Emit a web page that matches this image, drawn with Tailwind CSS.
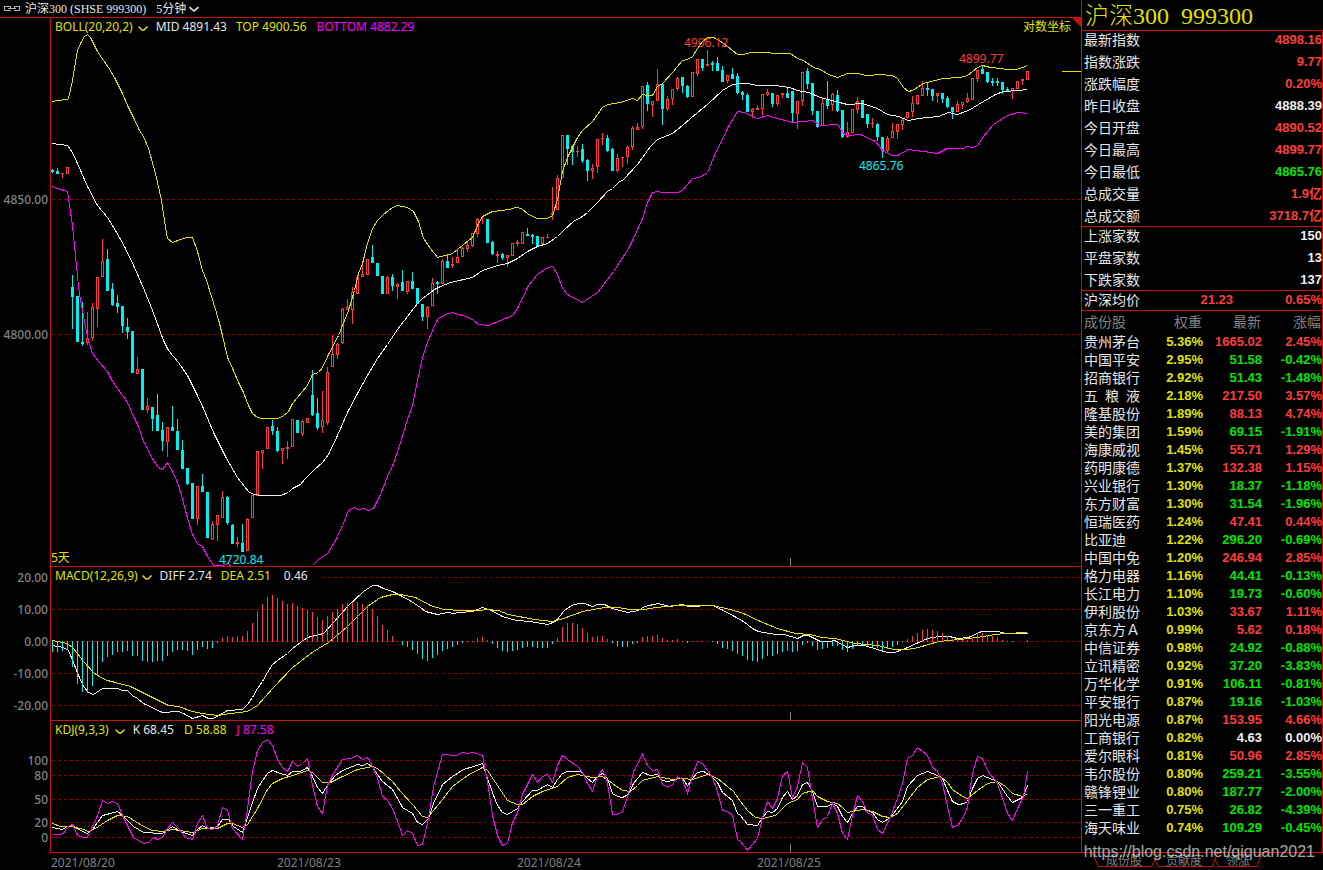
<!DOCTYPE html>
<html lang="zh-CN">
<head>
<meta charset="utf-8">
<title>沪深300 (SHSE 999300)</title>
<script src="https://cdn.jsdelivr.net/npm/@tailwindcss/browser@4"></script>
</head>
<body class="bg-black text-[#e6e6e6]">
<div class="relative flex min-h-screen w-full overflow-hidden bg-black font-['Noto_Sans','Noto_Sans_CJK_SC',sans-serif] text-xs">

  <main class="flex min-w-0 flex-1 flex-col">
    <header class="flex h-[17px] items-center pl-1 font-['Liberation_Serif','Noto_Sans_CJK_SC',serif] text-xs leading-4">
      <svg class="mr-1 h-[6px] w-[17px]" viewBox="0 0 17 6" fill="none" stroke="#b4b4b4" shape-rendering="crispEdges" aria-hidden="true"><path d="M6 1.500V.5H.5V4.500H6V3.500M10 1.500V.5H15.500V4.500H10V3.500M4 2.500H12"/></svg>
      <h1 class="whitespace-pre">沪深300 (SHSE 999300)</h1>
      <button type="button" class="ml-[10px] flex items-center gap-[3px]">5分钟
        <svg class="h-[6px] w-[10px]" viewBox="0 0 10 6" fill="none" stroke="#e6e6e6" stroke-width="1.6" aria-hidden="true"><path d="M.5 1 5 5 9.500 1"/></svg>
      </button>
    </header>

    <section class="flex min-h-[549px] flex-1" aria-label="BOLL">
      <div class="flex w-[50px] flex-col gap-[119px] border-t border-[#c81408] pt-[174px] pr-[2px] text-right leading-4 font-medium text-[#828282]">
        <span>4850.00</span><span>4800.00</span>
      </div>
      <div class="relative min-w-0 flex-1 overflow-hidden border-t border-l border-[#c81408]">
        <svg class="absolute inset-0 h-full w-full" aria-hidden="true">
          <g transform="translate(-50.5 -17.5)" fill="none" shape-rendering="crispEdges">
            <path stroke="#8c0000" stroke-dasharray="3 3" d="M51 199H3000M51 334H3000"/>
            <path stroke="#828282" d="M790 557V567"/>
            <path id="upWick" stroke="#ff3c3c"/>
            <path id="upBody" stroke="#ff3c3c" fill="#000"/>
            <path id="downWick" stroke="#00f0f0"/>
            <path id="downBody" fill="#00f0f0"/>
            <polyline stroke="#e1e100" points="52,101 57,100 67,99 68,98 72,80 77,50 80,43 84,36 87,34 90,37 97,51 103,60 108,67 114,77 122,93 127,105 134,119 139,130 143,136 148,148 155,173 161,200 164,220 167,238 172,242 180,239 186,237 192,237 197,251 202,270 206,280 212,299 218,319 222,335 227,357 233,370 238,382 243,392 248,405 252,413 257,417 262,418 277,418 282,416 288,411 292,403 302,391 307,385 312,374 318,372 322,367 328,354 338,335 348,310 354,290 358,273 362,263 367,243 372,228 377,220 383,214 392,207 397,205 407,207 413,211 418,221 423,238 430,248 437,257 452,253 468,240 472,237 477,225 482,216 492,211 509,209 515,207 521,208 528,214 537,218 547,218 552,215 557,199 562,171 567,157 572,147 577,137 582,130 592,121 602,107 607,104 620,102 632,98 637,100 642,94 647,95 652,95 657,86 662,83 672,72 682,60 687,59 692,56 697,48 702,41 707,37 713,37 722,42 737,54 743,54 750,52 790,53 797,58 803,60 813,67 820,69 828,74 837,77 847,73 858,73 865,75 883,74 888,75 892,75 897,78 903,87 908,91 912,90 923,83 942,78 960,77 967,75 977,67 982,65 990,67 1000,68 1007,69 1016,69 1022,67 1027,65"/>
            <polyline stroke="#f0f0f0" points="52,143 67,145 72,152 77,163 87,186 97,205 107,217 115,230 124,246 134,267 144,290 152,310 163,340 168,350 178,362 187,375 197,395 203,408 213,432 225,456 237,477 248,491 253,494 262,495 280,495 288,492 292,488 300,484 305,478 313,470 322,462 328,454 337,435 347,412 357,393 367,375 377,358 387,344 397,329 407,316 417,303 422,298 434,289 440,286 450,282 472,277 482,270 497,265 507,263 517,258 527,251 537,246 547,243 557,236 563,230 573,221 582,216 587,212 597,202 607,191 612,188 618,182 623,179 637,164 650,146 657,139 672,133 682,125 697,112 707,104 722,90 732,84 739,83 747,83 757,85 775,85 789,87 797,90 808,92 820,97 835,101 847,104 862,103 877,108 887,114 898,116 908,120 918,118 938,116 948,112 957,114 968,110 973,107 983,101 995,94 1003,91 1018,90 1027,89"/>
            <polyline stroke="#f0f" points="52,186 57,188 67,191 68,198 72,225 78,286 80,300 87,336 92,353 98,361 107,371 112,381 127,402 133,416 138,426 143,441 153,460 158,467 162,469 167,462 172,471 177,482 182,498 187,518 192,534 197,543 202,546 207,556 213,565 222,565 228,563 232,568 300,575 312,565 318,559 327,553 335,540 342,525 348,510 353,507 358,509 363,508 368,510 373,508 380,494 387,476 393,463 400,442 407,419 412,405 417,380 422,357 427,342 432,330 437,319 445,314 452,312 468,317 473,320 478,324 488,325 500,320 512,315 517,308 528,285 537,274 547,267 552,266 557,274 562,288 567,294 582,302 597,292 613,271 628,248 633,238 642,218 647,202 652,192 657,191 662,192 677,192 682,190 692,178 699,177 707,172 713,157 728,126 737,111 743,112 757,118 767,115 780,119 793,122 812,120 820,125 837,124 843,133 847,135 860,134 875,141 883,151 892,155 897,155 908,149 937,153 947,148 962,148 967,146 972,147 977,145 983,136 993,124 1007,115 1017,112 1027,113"/>
          </g>
        </svg>
        <div class="relative flex items-start pt-px pl-1 leading-4">
          <button type="button" class="mr-2 flex items-center gap-[5px] text-[#e1e100]">BOLL(20,20,2)
            <svg class="mt-[2px] h-[5px] w-[10px]" viewBox="0 0 10 5" fill="none" stroke="#e1e100" stroke-width="1.5" aria-hidden="true"><path d="M.5.5 4 4H6L9.500.5"/></svg>
          </button>
          <span class="mr-[9px]">MID 4891.43</span><span class="mr-[10px] text-[#e1e100]">TOP 4900.56</span><span class="text-[#f0f]">BOTTOM 4882.29</span>
        </div>
        <button type="button" class="absolute top-px right-[10px] leading-4 text-[#e1e100]">对数坐标</button>
        <svg class="absolute top-0 right-0 h-[9px] w-[9px]" viewBox="0 0 9 9" fill="#c81408" aria-hidden="true"><path d="M0 0H9V9Z"/></svg>
        <div class="absolute top-[53px] right-0 h-px w-[19px] bg-[#e1e100]"></div>
        <span class="absolute bottom-0 left-0 leading-4 text-[#e1e100]">5天</span>
        <span class="absolute top-[17px] left-[633px] leading-4 text-[#ff3c3c]">4906.12</span>
        <span class="absolute top-[33px] left-[908px] leading-4 text-[#ff3c3c]">4899.77</span>
        <span class="absolute top-[140px] left-[808px] leading-4 text-[#00f0f0]">4865.76</span>
        <span class="absolute top-[536px] left-[168px] leading-3 text-[#00f0f0]">4720.84</span>
      </div>
    </section>

    <section class="flex h-[154px]" aria-label="MACD">
      <div class="flex w-[50px] flex-col gap-4 pt-1 pr-[2px] text-right leading-4 font-medium text-[#828282]">
        <span>20.00</span><span>10.00</span><span>0.00</span><span>-10.00</span><span>-20.00</span>
      </div>
      <div class="relative min-w-0 flex-1 overflow-hidden border-t border-l border-[#c81408]">
        <svg class="absolute inset-0 h-full w-full" aria-hidden="true">
          <g transform="translate(-50.5 -566.5)" fill="none" shape-rendering="crispEdges">
            <path stroke="#8c0000" stroke-dasharray="3 3" d="M51 577H3000M51 609H3000M51 641H3000M51 673H3000M51 705H3000"/>
            <path stroke="#828282" d="M790 711V720"/>
            <polyline stroke="#f0f0f0" points="52,645 63,647 68,650 73,662 78,675 83,686 88,692 93,694 102,688 117,688 122,690 127,690 132,695 137,698 143,703 162,712 178,711 183,713 192,718 202,715 208,718 213,718 220,714 227,710 242,709 247,704 252,697 257,688 262,681 267,672 272,664 277,660 287,653 292,648 307,637 323,633 333,622 347,606 363,591 372,585 377,585 383,588 392,591 400,595 411,601 420,607 425,611 437,614 447,612 453,613 459,612 472,611 482,607 491,610 502,616 516,620 530,621 547,624 555,621 564,610 571,605 578,603 584,603 592,606 597,604 604,604 612,608 627,612 638,610 644,606 658,603 669,606 682,604 688,606 712,605 721,609 734,616 743,621 752,628 758,631 775,634 784,634 797,638 803,635 808,635 820,641 829,641 834,640 847,647 855,645 864,645 877,649 887,652 894,652 905,648 916,643 927,638 938,636 949,636 957,638 968,637 981,631 998,631 1005,633 1027,633"/>
            <polyline stroke="#e1e100" points="52,640 67,643 73,648 83,661 93,672 100,677 107,680 115,682 130,686 162,702 168,705 178,706 192,711 202,713 217,715 230,713 247,711 257,705 272,688 292,667 313,651 328,642 347,626 367,606 380,597 392,594 400,594 415,597 430,605 443,609 461,610 478,610 487,609 498,610 508,614 534,619 552,621 563,618 582,611 604,607 617,607 630,609 643,609 656,607 675,605 712,605 730,609 743,613 760,621 777,628 795,633 810,634 821,637 834,638 855,643 877,645 894,649 907,649 918,647 938,641 959,639 977,637 994,634 1005,633 1027,632"/>
            <path id="macdUp" stroke="#ff3c3c"/>
            <path id="macdDown" stroke="#00f0f0"/>
          </g>
        </svg>
        <div class="relative flex w-[269px] items-start bg-black pt-px pl-1 leading-4">
          <button type="button" class="mr-2 flex items-center gap-1 text-[#e1e100]">MACD(12,26,9)
            <svg class="mt-[2px] h-[5px] w-[10px]" viewBox="0 0 10 5" fill="none" stroke="#e1e100" stroke-width="1.5" aria-hidden="true"><path d="M.5.5 4 4H6L9.500.5"/></svg>
          </button>
          <span class="mr-[9px]">DIFF 2.74</span><span class="mr-[13px] text-[#e1e100]">DEA 2.51</span><span>0.46</span>
        </div>
      </div>
    </section>

    <section class="flex h-[132px]" aria-label="KDJ">
      <div class="flex w-[50px] flex-col pt-[34px] pr-[2px] text-right leading-[14px] font-medium text-[#828282]">
        <span>100</span><span class="mt-px">80</span><span class="mt-[10px]">50</span><span class="mt-[9px]">20</span><span class="mt-px">0</span>
      </div>
      <div class="relative min-w-0 flex-1 overflow-hidden border-t border-l border-[#c81408]">
        <svg class="absolute inset-0 h-full w-full" aria-hidden="true">
          <g transform="translate(-50.5 -720.5)" fill="none" shape-rendering="crispEdges">
            <path stroke="#8c0000" stroke-dasharray="3 3" d="M51 760H3000M51 775H3000M51 799H3000M51 822H3000M51 837H3000"/>
            <path stroke="#828282" d="M790 843V852"/>
            <polyline stroke="#f0f0f0" points="52,827 57,828 62,829 67,826 72,825 80,830 87,833 92,829 102,815 110,813 117,811 122,815 133,826 143,832 162,833 172,826 180,831 192,835 197,829 202,825 207,828 217,826 222,819 228,819 233,826 242,832 247,817 252,802 257,788 262,780 267,773 272,770 280,773 287,775 292,771 300,771 307,767 312,776 317,787 322,793 328,783 335,775 342,770 357,764 362,765 367,763 372,767 377,774 382,781 392,789 400,803 402,807 412,813 417,822 422,824 428,818 433,803 442,784 452,776 463,769 473,766 482,763 487,778 492,792 497,805 502,812 507,814 517,808 522,801 532,790 537,790 547,784 552,787 557,779 562,773 567,771 580,771 587,778 592,782 597,776 602,773 607,778 612,793 617,796 622,797 628,794 633,783 642,772 650,775 657,774 662,780 667,781 672,780 677,778 682,778 687,785 692,778 697,772 703,771 710,775 717,782 722,792 732,800 737,813 740,815 747,824 757,825 762,817 767,811 772,812 777,808 782,797 787,791 792,799 797,795 802,784 807,782 812,791 817,806 827,806 832,803 837,806 842,816 847,822 852,813 857,806 862,806 867,810 872,812 877,819 882,822 890,817 902,801 907,786 917,775 927,771 937,775 942,778 947,790 952,801 958,804 964,803 967,801 972,788 977,778 982,775 997,781 1007,796 1012,802 1022,797 1027,785"/>
            <polyline stroke="#e1e100" points="52,823 60,826 72,826 83,829 88,831 95,828 107,820 117,815 127,816 143,826 152,830 162,831 172,829 192,832 202,828 217,828 227,823 232,823 242,827 247,824 257,808 267,789 272,783 282,778 292,775 307,770 312,772 322,782 330,782 340,777 357,769 372,766 377,768 392,781 400,791 412,804 422,816 427,817 433,810 442,799 452,786 467,775 482,767 487,770 497,785 507,800 517,804 522,804 532,796 542,791 557,786 567,777 577,774 592,777 602,776 612,783 622,790 630,791 637,785 642,780 657,776 672,779 682,778 692,779 707,774 717,778 727,786 733,791 740,801 747,810 755,817 762,818 775,815 787,803 797,799 802,793 812,790 817,796 827,801 837,803 842,807 847,812 862,809 872,811 882,816 890,817 897,813 907,800 917,787 927,779 940,776 947,782 952,789 962,796 967,798 977,790 987,783 997,781 1005,786 1012,793 1022,796 1027,793"/>
            <polyline stroke="#f0f" points="52,834 59,834 63,833 67,826 72,824 77,835 83,837 87,837 92,826 97,815 102,800 107,803 112,801 117,803 122,815 127,825 133,837 143,843 148,842 153,837 157,839 162,837 167,828 172,822 179,829 185,837 192,839 197,823 202,815 207,828 212,829 217,825 222,807 227,810 232,828 242,839 247,808 252,771 257,750 262,742 267,739 272,745 277,759 282,767 287,771 292,761 297,766 302,763 307,758 312,785 317,806 322,813 327,785 333,773 342,759 350,758 357,755 362,759 367,757 372,766 377,778 382,796 387,800 392,808 400,829 402,835 407,830 412,833 417,845 422,844 428,818 433,786 442,754 455,755 462,752 467,753 473,752 482,755 487,781 492,815 497,835 502,845 507,843 512,822 517,812 522,794 532,774 537,782 542,776 547,774 552,782 557,765 562,755 567,759 577,766 582,772 587,783 592,791 597,776 602,769 607,783 612,814 617,814 622,811 628,793 633,771 642,754 647,765 652,770 657,769 662,784 667,787 672,784 677,776 682,779 687,793 692,775 697,761 702,763 707,770 712,777 717,791 722,810 727,811 732,815 737,839 740,841 747,850 757,838 762,817 767,801 772,808 777,798 782,775 787,771 792,797 797,786 802,762 807,767 812,798 817,827 822,819 827,816 832,803 837,813 842,833 847,839 852,815 857,795 862,801 867,812 872,815 877,829 882,833 890,816 897,798 902,783 907,758 912,755 917,747 922,751 927,755 932,767 937,771 942,783 947,806 952,827 957,825 962,818 967,807 972,773 977,756 982,758 987,770 997,783 1007,813 1012,820 1017,808 1023,796 1027,771"/>
          </g>
        </svg>
        <div class="relative flex items-start pt-px pl-1 leading-4">
          <button type="button" class="mr-2 flex items-center gap-[6px] text-[#e1e100]">KDJ(9,3,3)
            <svg class="mt-[2px] h-[5px] w-[10px]" viewBox="0 0 10 5" fill="none" stroke="#e1e100" stroke-width="1.5" aria-hidden="true"><path d="M.5.5 4 4H6L9.500.5"/></svg>
          </button>
          <span class="mr-[10px]">K 68.45</span><span class="mr-[10px] text-[#e1e100]">D 58.88</span><span class="text-[#f0f]">J 87.58</span>
        </div>
      </div>
    </section>

    <footer class="flex h-[18px] pl-[50px] leading-[19px] text-[#828282]">
      <div class="flex min-w-0 flex-1 border-t border-[#c81408] pl-px">
        <span class="w-[226px]">2021/08/20</span><span class="w-[240px]">2021/08/23</span><span class="w-[240px]">2021/08/24</span><span>2021/08/25</span>
      </div>
    </footer>
  </main>

  <aside class="flex w-[242px] shrink-0 flex-col text-sm leading-[14px]">
    <div class="flex flex-1 flex-col border-l border-[#c81408]">
      <h2 class="flex h-[30px] items-center gap-3 pt-px pl-[3px] font-['Liberation_Serif','Noto_Sans_CJK_SC',serif] text-2xl leading-6 font-light text-[#e1e100]"><span>沪深300</span><span>999300</span></h2>
      <div class="flex flex-1 flex-col border-t border-r border-[#c81408] font-['Liberation_Sans','Noto_Sans_CJK_SC',sans-serif]">
        <dl id="quote" class="flex flex-col gap-2 pt-[2px] pb-[3px]"></dl>
        <dl id="breadth" class="flex flex-col gap-2 border-t border-[#c81408] pt-[2px] pb-[3px]"></dl>
        <dl class="flex border-t border-[#c81408] pt-[2px] pb-[3px]">
          <dt class="w-[62px] pl-[2px]">沪深均价</dt>
          <dd class="w-[89px] text-right text-[13px] font-bold text-[#ff3c3c]">21.23</dd>
          <dd class="flex-1 text-right text-[13px] font-bold text-[#ff3c3c]">0.65%</dd>
        </dl>
        <table class="w-full table-fixed border-t border-[#c81408]">
          <colgroup><col class="w-[62px]"><col class="w-[59px]"><col class="w-[59px]"><col></colgroup>
          <thead>
            <tr class="h-[22px] text-[#828282]">
              <th scope="col" class="pl-[2px] text-left font-normal">成份股</th><th scope="col" class="pr-px text-right font-normal">权重</th><th scope="col" class="pr-px text-right font-normal">最新</th><th scope="col" class="pr-px text-right font-normal">涨幅</th>
            </tr>
          </thead>
          <tbody id="stocks"></tbody>
        </table>
      </div>
    </div>
    <nav class="relative h-[18px] font-['Noto_Sans_CJK_SC',sans-serif] text-xs text-[#828282]" aria-label="板块">
      <svg class="absolute inset-0 h-full w-full" fill="none" stroke="#c81408" aria-hidden="true"><path d="M0 .5H242M11 .5 17.500 14.500H70.500L77 .5M73 7 77 14.500H131L137 .5M133.500 7 137.500 14.500H176L181 .5"/></svg>
      <div class="relative flex gap-6 pl-[25px] leading-4">
        <button type="button">成份股</button><button type="button">贡献度</button><button type="button">领涨</button>
      </div>
    </nav>
  </aside>

  <div class="pointer-events-none absolute right-2 bottom-2 font-['Liberation_Sans',sans-serif] text-base leading-5 text-white/65">https://blog.csdn.net/qiquan2021</div>
</div>

<script>
// Candles, one every five pixels: direction, high, body top, body bottom, low
const candles = `c 169 170 172 173|c 168 171 174 174|r 173 173 174 178|r 167 167 174 174|c 275 287 297 329|c 296 296 342 342|c 302 342 344 346|r 312 338 343 345|r 303 307 338 341|r 277 277 309 327
r 239 261 277 277|c 249 259 291 291|c 283 289 305 306|c 295 303 307 313|c 306 306 326 333|c 318 327 332 339|c 331 331 373 373|r 357 369 374 374|c 369 369 410 410|r 398 406 410 413
c 407 407 419 431|c 394 415 431 431|c 422 430 441 451|r 427 427 442 457|c 406 427 431 431|c 419 431 450 450|c 440 450 469 469|c 468 468 484 485|c 483 483 519 519|r 486 486 519 525
c 474 486 492 492|c 492 492 538 538|r 521 524 539 540|r 515 515 525 541|r 491 497 518 518|c 496 497 523 525|c 524 525 544 544|r 537 542 544 547|c 524 543 552 552|r 518 519 551 551
r 495 495 518 518|r 451 451 496 496|r 450 450 453 469|r 427 427 449 449|c 420 426 431 435|c 427 431 451 452|r 448 448 451 464|r 441 447 449 459|r 419 419 447 447|c 420 420 433 433
r 420 421 434 436|r 418 418 423 423|c 370 395 415 416|c 398 413 428 430|r 391 420 427 433|r 367 372 423 425|r 335 354 367 367|r 343 344 355 359|r 308 309 343 344|r 299 307 310 310
r 287 292 310 324|r 276 277 294 294|r 263 274 277 277|r 259 259 275 275|c 245 257 263 263|c 263 263 276 276|c 276 276 294 294|r 276 277 294 294|c 274 277 286 291|r 283 284 287 299
c 270 282 291 291|r 281 281 292 294|c 272 281 289 289|c 288 288 304 304|c 304 304 317 321|r 306 307 317 329|r 278 283 306 306|c 281 282 284 294|r 259 261 284 284|c 255 261 268 268
r 257 264 266 268|r 250 257 263 263|r 247 248 257 257|r 242 245 249 252|r 233 233 246 247|r 218 219 234 237|r 217 218 219 224|c 219 219 243 243|c 241 242 254 255|r 251 254 256 263
c 253 254 258 260|r 255 255 258 267|r 243 243 256 256|r 240 242 244 246|r 232 232 244 244|c 228 234 236 236|c 234 235 237 244|c 236 236 246 246|r 237 237 244 244|r 234 237 238 238
r 187 213 215 220|r 175 178 210 210|r 135 135 178 178|c 135 135 149 165|c 145 146 152 165|r 146 151 152 157|c 144 149 161 163|c 159 160 171 181|r 164 168 171 179|r 139 139 167 173
r 133 138 139 145|c 135 138 151 152|c 148 149 171 171|r 154 158 171 172|r 157 157 158 167|r 145 147 157 164|r 126 128 147 150|r 123 127 130 130|r 86 86 127 129|c 82 85 104 111
r 101 101 105 117|r 69 84 101 101|c 84 84 109 125|r 96 99 109 111|r 89 89 99 105|r 77 78 89 91|c 77 77 86 93|c 85 86 97 98|r 72 72 97 97|r 59 59 74 76
c 59 59 68 71|r 50 64 66 66|c 61 63 65 71|c 57 63 71 71|c 66 70 82 82|r 75 75 81 83|c 68 74 79 79|c 73 76 93 94|c 91 92 95 100|c 93 95 112 112
r 108 109 112 118|r 105 108 110 110|r 94 94 109 115|r 89 92 95 96|c 93 93 104 107|r 95 95 104 106|r 93 93 95 98|c 88 93 98 98|c 91 91 113 122|r 101 101 114 129
r 72 72 101 106|c 68 71 84 89|c 83 83 111 115|c 111 111 127 128|r 97 103 126 126|c 81 99 106 109|r 93 94 105 111|c 90 95 111 112|c 110 110 137 138|r 122 132 137 138
r 109 109 133 133|r 97 101 110 114|c 100 100 118 118|c 114 114 124 128|r 118 123 124 128|c 123 124 137 141|c 137 137 151 158|r 136 138 151 152|r 123 131 138 138|r 124 124 132 139
r 119 120 125 130|r 112 112 118 118|r 96 103 112 117|r 95 95 104 105|r 81 88 96 96|c 82 88 90 96|c 89 89 96 101|r 93 93 96 103|c 93 93 99 103|c 96 98 107 108
c 107 107 112 119|r 101 104 112 112|r 102 102 105 109|r 93 98 102 103|r 78 78 100 100|r 70 70 79 82|c 66 69 74 74|c 72 72 82 83|c 78 81 83 86|c 78 81 83 86
c 82 82 90 94|c 87 89 91 91|r 88 88 91 99|r 81 81 89 89|r 79 79 81 85|r 71 71 80 80`.split(/[|\n]/);
const d = { upWick: '', upBody: '', downWick: '', downBody: '', macdUp: '', macdDown: '' };
candles.forEach((row, i) => {
  const [dir, ...v] = row.trim().split(' ');
  const [high, top, bottom, low] = v.map(Number);
  const x = 52 + 5 * i;
  const wick = `M${x} ${high - .5}V${low - .5}`;
  if (dir === 'r') {
    d.upWick += wick;
    d.upBody += `M${x - 1.5} ${top}H${x + 1.5}M${x - 1} ${top}H${x + 1}V${bottom - 1}H${x - 1}Z`;
  } else {
    d.downWick += wick;
    d.downBody += `M${x - 1.5} ${top - .5}h3V${bottom - .5}h-3Z`;
  }
});
// MACD histogram heights in pixels, positive above the zero line
const macd = [-11,-11,-10,-9,-26,-43,-51,-52,-45,-35,-21,-16,-14,-11,-11,-10,-15,-15,-20,-21,-21,-20,-20,-15,-11,-9,-9,-10,-14,-9,-6,-8,-7,-2,
  4,6,5,6,6,11,19,31,38,45,47,44,41,38,39,36,34,32,30,25,22,26,30,33,38,39,40,40,38,37,33,26,17,12,6,1,
  -4,-6,-9,-13,-18,-20,-17,-14,-10,-8,-6,-4,-2,-1,1,4,5,2,-3,-7,-10,-11,-10,-9,-7,-6,-6,-7,-7,-7,-3,4,15,19,19,18,14,9,5,6,6,3,-2,-5,-6,-6,-3,-2,5,6,6,7,4,2,2,3,1,-2,-1,1,1,0,
  -1,-3,-7,-8,-10,-13,-15,-19,-20,-21,-18,-15,-15,-13,-11,-10,-11,-10,-4,-2,-5,-9,-8,-7,-5,-5,-9,-11,-8,-4,-4,-5,-6,-7,-9,-8,-6,-4,-1,
  3,6,9,12,13,12,11,9,6,3,3,2,2,5,8,9,7,6,5,2,1,-1,0,0,2];
macd.forEach((v, i) => {
  const x = 52 + 5 * i;
  if (v > 0) d.macdUp += `M${x} ${641.5 - v}V641.5`;
  if (v < 0) d.macdDown += `M${x} 640.5V${640.5 - v}`;
});
for (const id in d) document.getElementById(id).setAttribute('d', d[id]);

const tone = { r: 'text-[#ff3c3c]', g: 'text-[#00e600]', w: 'text-[#f0f0f0]' };
const listRow = ([name, value, t]) => `<div class="flex justify-between"><dt class="pl-[2px]">${name}</dt><dd class="text-[13px] font-bold ${tone[t]}">${value}</dd></div>`;
document.getElementById('quote').innerHTML = [['最新指数','4898.16','r'],['指数涨跌','9.77','r'],['涨跌幅度','0.20%','r'],['昨日收盘','4888.39','w'],['今日开盘','4890.52','r'],['今日最高','4899.77','r'],['今日最低','4865.76','g'],['总成交量','1.9亿','r'],['总成交额','3718.7亿','r']].map(listRow).join('');
document.getElementById('breadth').innerHTML = [['上涨家数','150','w'],['平盘家数','13','w'],['下跌家数','137','w']].map(listRow).join('');
const stocks = `贵州茅台,5.36,1665.02,2.45|中国平安,2.95,51.58,-0.42|招商银行,2.92,51.43,-1.48|五&ensp;粮&ensp;液,2.18,217.50,3.57|隆基股份,1.89,88.13,4.74|美的集团,1.59,69.15,-1.91|海康威视,1.45,55.71,1.29|药明康德,1.37,132.38,1.15|兴业银行,1.30,18.37,-1.18|东方财富,1.30,31.54,-1.96|恒瑞医药,1.24,47.41,0.44|比亚迪,1.22,296.20,-0.69|中国中免,1.20,246.94,2.85|格力电器,1.16,44.41,-0.13|长江电力,1.10,19.73,-0.60|伊利股份,1.03,33.67,1.11|京东方&#xFF21;,0.99,5.62,0.18|中信证券,0.98,24.92,-0.88|立讯精密,0.92,37.20,-3.83|万华化学,0.91,106.11,-0.81|平安银行,0.87,19.16,-1.03|阳光电源,0.87,153.95,4.66|工商银行,0.82,4.63,0.00|爱尔眼科,0.81,50.96,2.85|韦尔股份,0.80,259.21,-3.55|赣锋锂业,0.80,187.77,-2.00|三一重工,0.75,26.82,-4.39|海天味业,0.74,109.29,-0.45`;
document.getElementById('stocks').innerHTML = stocks.split('|').map(s => {
  const [name, weight, price, change] = s.split(',');
  const t = tone[change > 0 ? 'r' : change < 0 ? 'g' : 'w'];
  return `<tr class="h-[18px] text-right text-[13px] font-bold ${t}"><th scope="row" class="pl-[2px] text-left text-sm leading-[14px] font-normal whitespace-nowrap text-[#e6e6e6]">${name}</th><td class="text-[#e1e100]">${weight}%</td><td>${price}</td><td>${change}%</td></tr>`;
}).join('');
</script>
</body>
</html>
